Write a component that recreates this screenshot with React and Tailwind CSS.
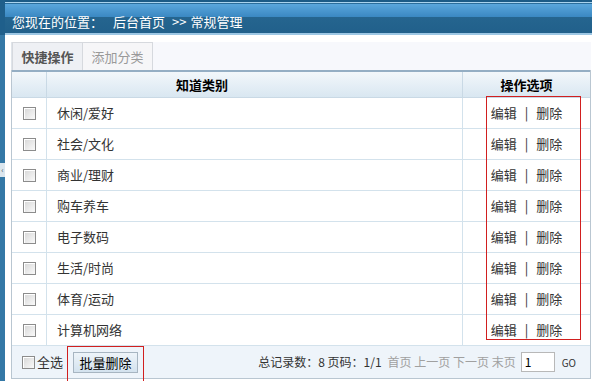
import React from 'react';

const categories = ['休闲/爱好', '社会/文化', '商业/理财', '购车养车', '电子数码', '生活/时尚', '体育/运动', '计算机网络'];

const Box = () => (
  <span className="inline-block w-[13px] h-[13px] border border-[#8c8c8c] bg-[linear-gradient(135deg,#d6d6d6,#fafafa)] shadow-[inset_1px_1px_0_#fff]" />
);

const App = () => {
  return (
    <div className="w-[596px] h-[381px] flex bg-white overflow-hidden text-[12px] text-[#333] font-['Noto_Sans_CJK_SC','Noto_Sans',sans-serif]">
      <div className="w-[5px] shrink-0 flex flex-col bg-[#3478a6]">
        <div className="h-[35px] bg-[#1f5f8b]" />
        <div className="mt-[128px] h-[14px] bg-[#dbe6ee] text-[#456] text-[8px] leading-[14px] flex items-center justify-center">‹</div>
      </div>

      <div className="flex-1 flex flex-col relative">
        <div className="h-[35px] mr-[4px] flex items-center pl-[7px] pt-[9px] text-white text-[13px] bg-[linear-gradient(#1c5b86_0px,#1c5b86_2px,#a9d3ee_2px,#a9d3ee_3px,#2b6e9c_3px,#2b6e9c_4px,#5aa6dc_4px,#3a88c2_17px,#25658f_17px,#21608b_33px,#9dc7e4_33px)]">
          <span>您现在的位置：</span>
          <span className="ml-[10px]">后台首页</span>
          <span className="ml-[7px]">&gt;&gt;</span>
          <span className="ml-[4px]">常规管理</span>
        </div>

        <div className="ml-[6px] mr-[5px] mt-[7px] flex flex-col relative">
          <div className="h-[28px] flex bg-[#f7f8fc] border-l border-[#dfe4ea]">
            <div className="w-[71px] flex items-center justify-center bg-[#eef0f4] border border-b-0 border-[#d6d9de] font-bold text-[#555] text-[13px]">快捷操作</div>
            <div className="w-[70px] flex items-center justify-center bg-[#f6f6f8] border-t border-r border-[#d6d9de] text-[#999] text-[13px]">添加分类</div>
          </div>

          <div className="border-l border-r border-b border-[#b9c6d1]">
            <div className="h-[28px] flex border-t-2 border-[#94aec4] border-b border-b-[#c9d9e5] bg-[linear-gradient(#f2f7fb,#d9e7f1)] font-bold text-[13px] text-black">
              <div className="w-[35px] border-r border-[#c9d9e5]" />
              <div className="w-[416px] border-r border-[#c9d9e5] flex items-center pl-[129px]">知道类别</div>
              <div className="flex-1 flex items-center justify-center">操作选项</div>
            </div>

            {categories.map((name) => (
              <div key={name} className="h-[31px] flex border-b border-[#d3e2ec] bg-white">
                <div className="w-[35px] border-r border-[#d3e2ec] flex items-center justify-center"><Box /></div>
                <div className="w-[416px] border-r border-[#d3e2ec] flex items-center pl-[10px] text-[13px] text-[#333]">{name}</div>
                <div className="flex-1 flex items-center justify-center text-[13px] text-[#333]">
                  <span className="text-[#333]">编辑</span>
                  <span className="mx-[8px] text-[#333]">|</span>
                  <span className="text-[#333]">删除</span>
                </div>
              </div>
            ))}

            <div className="h-[32px] flex items-center bg-[#eef4fa]">
              <div className="ml-[10px] flex items-center gap-[2px] text-[13px]"><Box />全选</div>
              <button className="ml-[10px] h-[21px] w-[65px] border border-[#a7b5c1] bg-[linear-gradient(#eef4f9,#d3e2ee)] text-[13px] text-black">批量删除</button>
              <div className="ml-auto mr-[14px] flex items-center text-[12px]">
                <span>总记录数：8 页码：1/1</span>
                <span className="ml-[6px] text-[#a0a0a0]">首页 上一页 下一页 末页</span>
                <span className="ml-[5px] w-[34px] h-[20px] border border-[#b8b8b8] bg-white pl-[3px] leading-[18px] text-black">1</span>
                <span className="ml-[7px] text-[10px]">GO</span>
              </div>
            </div>
          </div>

          <div className="absolute left-[475px] top-[54px] w-[95px] h-[244px] border border-[#d11f1f]" />
          <div className="absolute left-[56px] top-[304px] w-[77px] h-[40px] border border-[#d11f1f]" />
        </div>
      </div>
    </div>
  );
};

export default App;
